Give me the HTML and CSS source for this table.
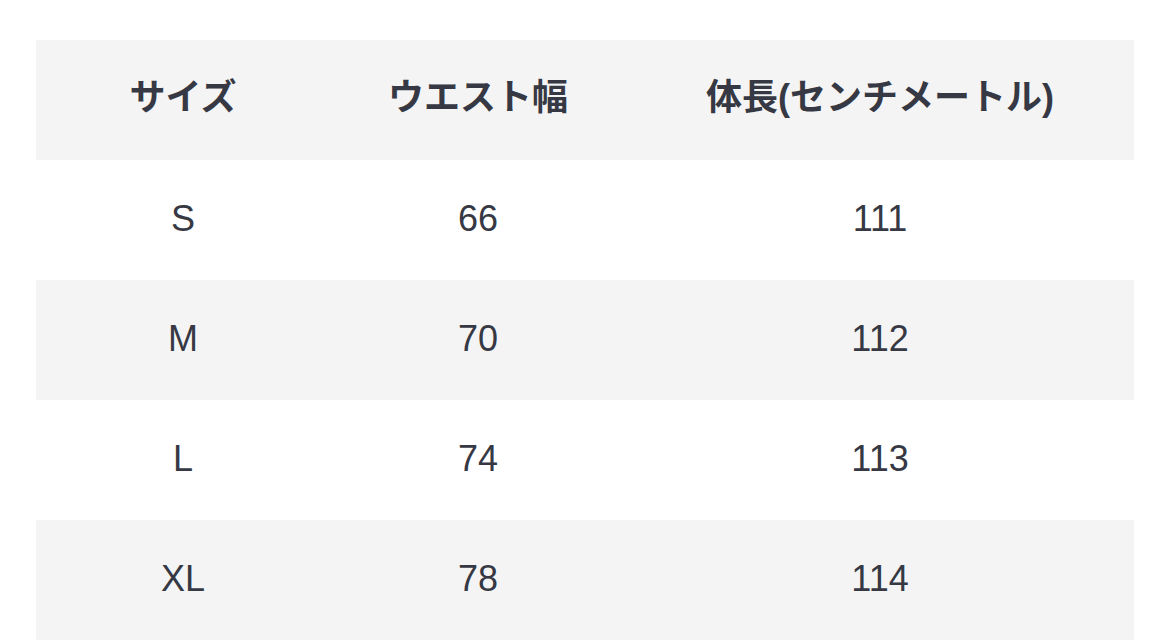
FILE: index.html
```html
<!DOCTYPE html>
<html lang="ja">
<head>
<meta charset="utf-8">
<link rel="stylesheet" href="styles.css">
</head>
<body>
<div class="wrap">
<table class="size-table">
  <colgroup>
    <col class="c1"><col class="c2"><col class="c3">
  </colgroup>
  <thead>
    <tr><th>サイズ</th><th>ウエスト幅</th><th>体長(センチメートル)</th></tr>
  </thead>
  <tbody>
    <tr><td>S</td><td>66</td><td>111</td></tr>
    <tr><td>M</td><td>70</td><td>112</td></tr>
    <tr><td>L</td><td>74</td><td>113</td></tr>
    <tr><td>XL</td><td>78</td><td>114</td></tr>
  </tbody>
</table>
</div>
</body>
</html>
```
FILE: styles.css
```css
html, body {
  margin: 0;
  padding: 0;
  background: #ffffff;
}
.wrap {
  padding: 40px 36px 0 36px;
}
.size-table {
  width: 1098px;
  border-collapse: collapse;
  table-layout: fixed;
  font-family: "Liberation Sans", "Noto Sans CJK JP", sans-serif;
  color: #363943;
}
.c1 { width: 294px; }
.c2 { width: 296px; }
.c3 { width: 508px; }
.size-table th,
.size-table td {
  box-sizing: border-box;
  height: 120px;
  padding: 0;
  text-align: center;
  vertical-align: middle;
  font-size: 36px;
  line-height: 1;
}
.size-table th {
  font-weight: bold;
  padding-bottom: 4px;
}
.size-table td {
  font-weight: normal;
  padding-bottom: 2px;
}
.size-table thead tr,
.size-table tbody tr:nth-child(even) {
  background: #f4f4f5;
}
.size-table tbody tr:nth-child(odd) {
  background: #ffffff;
}
```
